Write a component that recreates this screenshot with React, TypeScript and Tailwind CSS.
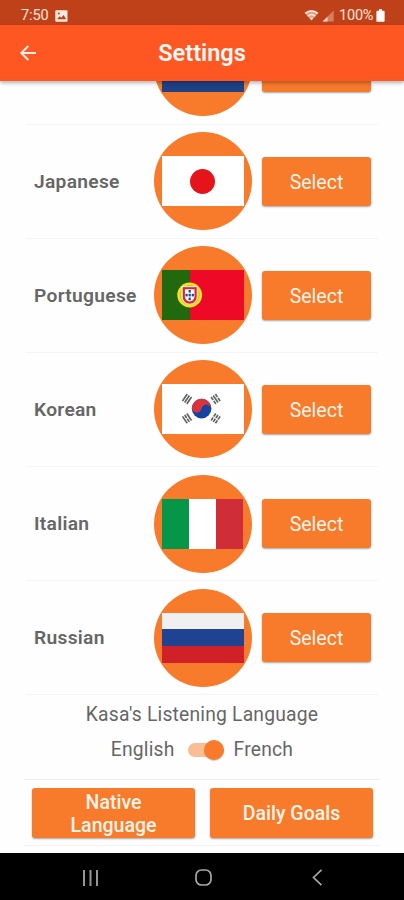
import type { ReactNode } from 'react';

const languages: { name: string; flag: ReactNode }[] = [
  { name: 'Japanese', flag: <JapaneseFlag /> },
  { name: 'Portuguese', flag: <PortugueseFlag /> },
  { name: 'Korean', flag: <KoreanFlag /> },
  { name: 'Italian', flag: <ItalianFlag /> },
  { name: 'Russian', flag: <RussianFlag /> },
];

function DutchFlag() {
  return (
    <div className="flex h-[50px] w-[82px] flex-col">
      <div className="flex-1 bg-[#ae1c28]" />
      <div className="flex-1 bg-white" />
      <div className="flex-1 bg-[#1f4287]" />
    </div>
  );
}

function RussianFlag() {
  return (
    <div className="flex h-[50px] w-[82px] flex-col">
      <div className="flex-1 bg-[#f0f0f0]" />
      <div className="flex-1 bg-[#1f4293]" />
      <div className="flex-1 bg-[#cf2127]" />
    </div>
  );
}

function ItalianFlag() {
  return (
    <div className="flex h-[50px] w-[82px]">
      <div className="flex-1 bg-[#069648]" />
      <div className="flex-1 bg-white" />
      <div className="flex-1 bg-[#cf2d38]" />
    </div>
  );
}

function JapaneseFlag() {
  return (
    <div className="flex h-[50px] w-[82px] items-center justify-center bg-white">
      <div className="size-[25px] rounded-full bg-[#e5131a]" />
    </div>
  );
}

function PortugueseFlag() {
  return (
    <svg className="h-[50px] w-[82px]" viewBox="0 0 82 50">
      <rect width="82" height="50" fill="#ee0a26" />
      <rect width="28" height="50" fill="#22680d" />
      <circle cx="27.7" cy="25" r="12.4" fill="#f3e32b" />
      <circle cx="27.7" cy="25" r="9.6" fill="none" stroke="#c9b822" strokeWidth=".8" />
      <path d="M20.2 16.7h15v10a7.5 7.5 0 0 1-15 0z" fill="#d9252b" stroke="#fff" strokeWidth=".9" />
      <path d="M22.9 19.2h9.6v7.4a4.8 4.8 0 0 1-9.6 0z" fill="#fff" />
      <g fill="#24408e">
        <rect x="26.6" y="20" width="2.2" height="2.6" />
        <rect x="26.6" y="23.8" width="2.2" height="2.6" />
        <rect x="26.6" y="27.6" width="2.2" height="2.6" />
        <rect x="23.5" y="23.8" width="2.2" height="2.6" />
        <rect x="29.7" y="23.8" width="2.2" height="2.6" />
      </g>
    </svg>
  );
}

function Trigram({ x, y, angle, split }: { x: number; y: number; angle: number; split: string }) {
  return (
    <g transform={`translate(${x} ${y}) rotate(${angle})`} stroke="#666" strokeWidth="1.7">
      {[-2.6, 0, 2.6].map((dy, i) => (
        <path key={dy} d={split[i] === '1' ? `M-4.2 ${dy}h3.7M.5 ${dy}h3.7` : `M-4.2 ${dy}h8.4`} />
      ))}
    </g>
  );
}

function KoreanFlag() {
  return (
    <svg className="h-[50px] w-[82px]" viewBox="0 0 82 50">
      <rect width="82" height="50" fill="#fff" />
      <circle cx="39.6" cy="24.6" r="9.8" fill="#1443a0" />
      <g transform="translate(39.6 24.6) rotate(10)">
        <path d="M-9.8 0A9.8 9.8 0 0 1 9.8 0A4.9 4.9 0 0 0 0 0A4.9 4.9 0 0 1 -9.8 0z" fill="#d8343b" />
      </g>
      <Trigram x={25} y={15} angle={-56} split="000" />
      <Trigram x={53.6} y={15} angle={56} split="101" />
      <Trigram x={25} y={34.4} angle={56} split="010" />
      <Trigram x={53.6} y={34.4} angle={-56} split="111" />
    </svg>
  );
}

function Button({ children, className }: { children?: ReactNode; className: string }) {
  return (
    <button
      className={`flex items-center justify-center rounded-[3px] bg-[#f77b2b] text-center text-[19.5px] leading-[23px] text-[#fff4e8] shadow-[0_1px_2px_rgba(0,0,0,0.35)] ${className}`}
    >
      {children}
    </button>
  );
}

function StatusBar() {
  return (
    <div className="flex h-[25px] items-center bg-[#bf4119] pt-[7px] pr-[19px] pl-[21px] text-[14.5px] leading-none text-[#ffe3d8]">
      <span className="w-[29px] pt-[1px] tracking-[-0.1px]">7:50</span>
      <svg className="ml-[5px] h-[12px] w-[13px]" viewBox="0 0 13 12">
        <rect x=".3" y=".2" width="12.2" height="11.6" rx="1" fill="#ffe9df" />
        <path d="M2 9.2l2.6-3 1.6 1.6L8.7 5l2.4 4.2z" fill="#bf4119" />
        <circle cx="3.8" cy="3.5" r="1" fill="#bf4119" />
      </svg>
      <svg className="mb-[2px] ml-auto h-[12px] w-[15px]" viewBox="0 0 15 12">
        <path d="M.5 3.8a10 10 0 0 1 14 0L7.5 11.5z" fill="#e5a188" />
        <path d="M1.3 4.6a8.8 8.8 0 0 1 12.4 0M3.8 7.2a5.2 5.2 0 0 1 7.4 0" fill="none" stroke="#fff0e9" strokeWidth="1.4" />
        <path d="M5.8 9.2a2.5 2.5 0 0 1 3.4 0l-1.7 2z" fill="#fff0e9" />
      </svg>
      <svg className="ml-[3px] h-[12px] w-[12px]" viewBox="0 0 12 12">
        <path d="M11.7.6v11H.5z" fill="#d77e62" />
        <path d="M5.5 6.7v4.9H.5z" fill="#f7cfc0" />
      </svg>
      <span className="ml-[5px] w-[37px] pt-[1px] tracking-[-0.2px]">100%</span>
      <svg className="mb-[1px] h-[13px] w-[9px]" viewBox="0 0 9 13">
        <path d="M3 .3h3v1.5h1.6q1 0 1 1V12q0 .8-.8.8H1.2q-.8 0-.8-.8V2.8q0-1 1-1H3z" fill="#fff" />
      </svg>
    </div>
  );
}

function LanguageRow({ name, flag }: { name?: string; flag: ReactNode }) {
  return (
    <div className="mx-[26px] flex h-[114.1px] shrink-0 items-center border-b border-[#f5f5f5] pr-[7px] pl-2">
      <span className="flex-1 pt-[2px] text-[19.2px] font-semibold tracking-[0.3px] text-[#666]">{name}</span>
      <div className="flex size-[98px] items-center justify-center overflow-hidden rounded-full bg-[#f77b2b]">
        {flag}
      </div>
      <Button className="ml-[10.5px] h-[49.5px] w-[109px] pt-[2px]">{name && 'Select'}</Button>
    </div>
  );
}

export default function App() {
  return (
    <div className="flex h-[900px] w-[404px] flex-col overflow-hidden bg-[#fefefe] font-[Roboto,sans-serif]">
      <StatusBar />
      <header className="z-10 flex h-[56px] shrink-0 items-center bg-[#ff5722] px-5 shadow-[0_2px_4px_rgba(0,0,0,0.3)]">
        <svg className="size-[16px]" viewBox="0 0 16 16" fill="none" stroke="#fff0ea" strokeWidth="2">
          <path d="M16 8H1.5M8.3 1L1.3 8l7 7" />
        </svg>
        <h1 className="flex-1 pt-[2px] pr-4 text-center text-[23.5px] font-semibold text-[#fff8f4]">Settings</h1>
      </header>
      <main className="flex min-h-0 flex-1 flex-col overflow-hidden">
        <div className="-mt-[70.4px] flex flex-col">
          <LanguageRow flag={<DutchFlag />} />
          {languages.map((l) => (
            <LanguageRow key={l.name} {...l} />
          ))}
        </div>
        <section className="mx-[24px] flex h-[85px] shrink-0 flex-col items-center border-b border-[#f0f0f0] text-[19.3px] leading-[24px] text-[#666]">
          <p className="mt-[8px] tracking-[0.2px]">Kasa's Listening Language</p>
          <div className="mt-[10.5px] flex items-center">
            <span className="tracking-[0.2px]">English</span>
            <div className="mr-[10px] ml-[13px] flex h-[14px] w-[36px] items-center justify-end rounded-full bg-[#fbbd95]">
              <div className="size-[20px] rounded-full bg-[#f77b2b] shadow-[0_1px_1px_rgba(0,0,0,0.2)]" />
            </div>
            <span className="tracking-[0.2px]">French</span>
          </div>
        </section>
        <section className="mx-[24px] flex h-[66px] shrink-0 justify-between border-b border-[#f2f2f2] pt-[8px] pr-[7px] pl-[8px]">
          <Button className="h-[50px] w-[163px] px-8 pt-[2px] font-medium">Native Language</Button>
          <Button className="h-[50px] w-[163px] pt-[1px] font-medium">Daily Goals</Button>
        </section>
      </main>
      <nav className="flex h-[47px] shrink-0 items-center bg-black pt-[2px] pl-[82px]">
        <svg className="h-[16px] w-[17px]" viewBox="0 0 17 16" stroke="#969696" strokeWidth="2">
          <path d="M2 0v16M8.5 0v16M15 0v16" />
        </svg>
        <svg className="ml-[96px] size-[17px]" viewBox="0 0 17 17" fill="none" stroke="#a8a8a8" strokeWidth="1.7">
          <rect x="1" y="1" width="15" height="15" rx="5.5" />
        </svg>
        <svg className="ml-[100px] h-[17px] w-[11px]" viewBox="0 0 11 17" fill="none" stroke="#a8a8a8" strokeWidth="1.7">
          <path d="M9.5.8L1.5 8.5l8 7.7" />
        </svg>
      </nav>
    </div>
  );
}
